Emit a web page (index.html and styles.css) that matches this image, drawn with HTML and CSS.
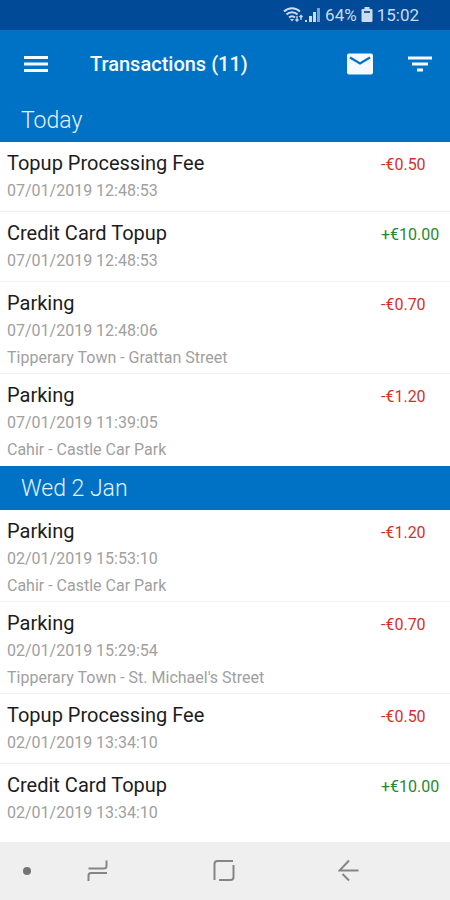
FILE: index.html
```html
<!DOCTYPE html>
<html lang="en">

<head>
    <meta charset="UTF-8">
    <meta name="viewport" content="width=device-width, initial-scale=1.0">
    <title>Transactions</title>
    <link rel="stylesheet" href="styles.css">
</head>

<body>

    <div class="status-bar">
        <svg class="wifi" width="21" height="18" viewBox="0 0 21 18" fill="none" stroke="currentColor" stroke-width="2">
            <path d="M1 5.500C5.500 1 12.500 1 17 5.500M3.500 8.500C6.500 5.500 11.500 5.500 14.500 8.500M6 11.500C8 9.800 10 9.800 12 11.500" />
            <path d="M7 13L9 15.500L11 13Z" fill="currentColor" stroke="none" />
            <path d="M14 10V15M12.500 13.500L14 15L15.500 13.500M18 14V9.500M16.500 11L18 9.500L19.500 11" stroke-width="1.300" />
        </svg>
        <svg class="signal" width="17" height="18" viewBox="0 0 17 18" fill="currentColor">
            <path d="M1 14h2v2H1zM5 10h3v6H5zM9 6h3v10H9z" />
            <path d="M13 2h3v14h-3z" opacity="0.6" />
        </svg>
        <span>64%</span>
        <svg class="battery" width="12" height="18" viewBox="0 0 12 18" fill="currentColor">
            <path d="M3.500 1h5v2H10.500a1 1 0 0 1 1 1V15a1 1 0 0 1-1 1H1.500a1 1 0 0 1-1-1V4a1 1 0 0 1 1-1H3.500z" />
            <path d="M3 5h6v2H3z" fill="#27599f" />
        </svg>
        <span>15:02</span>
    </div>

    <header class="app-bar">
        <button type="button" aria-label="Menu">
            <svg width="24" height="18" viewBox="0 0 24 18" fill="currentColor">
                <path d="M0 1h24v3H0zM0 7.500h24v3H0zM0 14h24v3H0z" />
            </svg>
        </button>
        <h1>Transactions (11)</h1>
        <button type="button" aria-label="Messages">
            <svg width="26" height="22" viewBox="0 0 26 22">
                <rect x="0" y="0.500" width="26" height="21" rx="2" fill="currentColor" />
                <path d="M3 4.500L13 10.500L23 4.500" fill="none" stroke="#0072c6" stroke-width="2.200" />
            </svg>
        </button>
        <button type="button" aria-label="Filter">
            <svg width="24" height="16" viewBox="0 0 24 16" fill="currentColor">
                <path d="M0 0.500h24v3H0zM4 6.500h16v3H4zM9 12.500h6v3H9z" />
            </svg>
        </button>
    </header>

    <main>
        <h2>Today</h2>
        <ul>
            <li>
                <div class="details">
                    <h3>Topup Processing Fee</h3>
                    <p>07/01/2019 12:48:53</p>
                </div>
                <span class="amount debit">-€0.50</span>
            </li>
            <li>
                <div class="details">
                    <h3>Credit Card Topup</h3>
                    <p>07/01/2019 12:48:53</p>
                </div>
                <span class="amount credit">+€10.00</span>
            </li>
            <li>
                <div class="details">
                    <h3>Parking</h3>
                    <p>07/01/2019 12:48:06</p>
                    <p class="place">Tipperary Town - Grattan Street</p>
                </div>
                <span class="amount debit">-€0.70</span>
            </li>
            <li>
                <div class="details">
                    <h3>Parking</h3>
                    <p>07/01/2019 11:39:05</p>
                    <p class="place">Cahir - Castle Car Park</p>
                </div>
                <span class="amount debit">-€1.20</span>
            </li>
        </ul>

        <h2>Wed 2 Jan</h2>
        <ul>
            <li>
                <div class="details">
                    <h3>Parking</h3>
                    <p>02/01/2019 15:53:10</p>
                    <p class="place">Cahir - Castle Car Park</p>
                </div>
                <span class="amount debit">-€1.20</span>
            </li>
            <li>
                <div class="details">
                    <h3>Parking</h3>
                    <p>02/01/2019 15:29:54</p>
                    <p class="place">Tipperary Town - St. Michael's Street</p>
                </div>
                <span class="amount debit">-€0.70</span>
            </li>
            <li>
                <div class="details">
                    <h3>Topup Processing Fee</h3>
                    <p>02/01/2019 13:34:10</p>
                </div>
                <span class="amount debit">-€0.50</span>
            </li>
            <li>
                <div class="details">
                    <h3>Credit Card Topup</h3>
                    <p>02/01/2019 13:34:10</p>
                </div>
                <span class="amount credit">+€10.00</span>
            </li>
        </ul>
    </main>

    <nav class="system-nav">
        <span class="dot"></span>
        <div class="keys">
            <button type="button" aria-label="Recent apps">
                <svg width="22" height="24" viewBox="0 0 22 24">
                    <path d="M1.500 9.500H17Q19.500 9.500 19.500 7V1.500M20 14H4Q1.500 14 1.500 16.500V22" />
                </svg>
            </button>
            <button type="button" aria-label="Home">
                <svg width="22" height="24" viewBox="0 0 22 24">
                    <path d="M1.500 21V5Q1.500 2 4.500 2H20M20.500 6V18Q20.500 21 17.500 21H6" />
                </svg>
            </button>
            <button type="button" aria-label="Back">
                <svg width="22" height="24" viewBox="0 0 22 24">
                    <path d="M11 1.500L1.500 11.500H20.500M4.500 15L11 21.500" />
                </svg>
            </button>
        </div>
    </nav>

</body>

</html>
```

FILE: styles.css
```css
* {
    box-sizing: border-box;
}

body {
    display: flex;
    flex-direction: column;
    min-height: 100vh;
    margin: 0;
    background-color: #ffffff;
    color: #1c1c1c;
    font-family: Roboto, sans-serif;
}

h1,
h2,
h3,
p,
ul {
    margin: 0;
    padding: 0;
    font-weight: 400;
}

button {
    display: flex;
    padding: 0;
    border: none;
    background: none;
    color: inherit;
    cursor: pointer;
}

svg {
    display: block;
}

/* Phone status bar */
.status-bar {
    display: flex;
    align-items: center;
    justify-content: flex-end;
    height: 30px;
    padding-right: 31px;
    background-color: #004a97;
    color: #c9dcf2;
    font-size: 17px;
}

.signal {
    margin-right: 4px;
}

.battery {
    margin: 0 4px;
}

.app-bar {
    display: flex;
    align-items: center;
    height: 68px;
    padding: 0 18px 0 24px;
    background-color: #0072c6;
    color: #f4faff;
}

.app-bar h1 {
    flex: 1;
    margin-left: 42px;
    font-size: 20px;
    font-weight: 500;
}

.app-bar button + button {
    margin-left: 35px;
}

h2 {
    padding: 2px 21px 0;
    background-color: #0072c6;
    color: #e4f1fc;
    font-size: 23px;
    font-weight: 300;
    line-height: 42px;
}

/* Transaction rows */
ul {
    list-style: none;
}

li {
    display: flex;
    min-height: 70px;
    padding: 7px 7px 2px;
    border-bottom: 1px solid #f1f1f1;
}

li:last-child {
    border-bottom-color: transparent;
}

.details {
    flex: 1;
}

h3 {
    font-size: 20px;
    line-height: 28px;
}

p {
    color: #a0a0a0;
    font-size: 16px;
    line-height: 28px;
}

.place {
    line-height: 26px;
}

.amount {
    width: 62px;
    font-size: 16px;
    line-height: 32px;
}

.debit {
    color: #d32f2f;
}

.credit {
    color: #1f8a2b;
}

/* Phone navigation keys */
.system-nav {
    display: flex;
    align-items: center;
    height: 58px;
    margin-top: auto;
    padding: 0 90px 0 23px;
    background-color: #efefef;
}

.keys {
    display: flex;
    flex: 1;
    justify-content: space-between;
    margin-left: 56px;
}

.system-nav svg {
    fill: none;
    stroke: #858585;
    stroke-width: 2;
}

.dot {
    width: 8px;
    height: 8px;
    border-radius: 50%;
    background-color: #757575;
}
```
